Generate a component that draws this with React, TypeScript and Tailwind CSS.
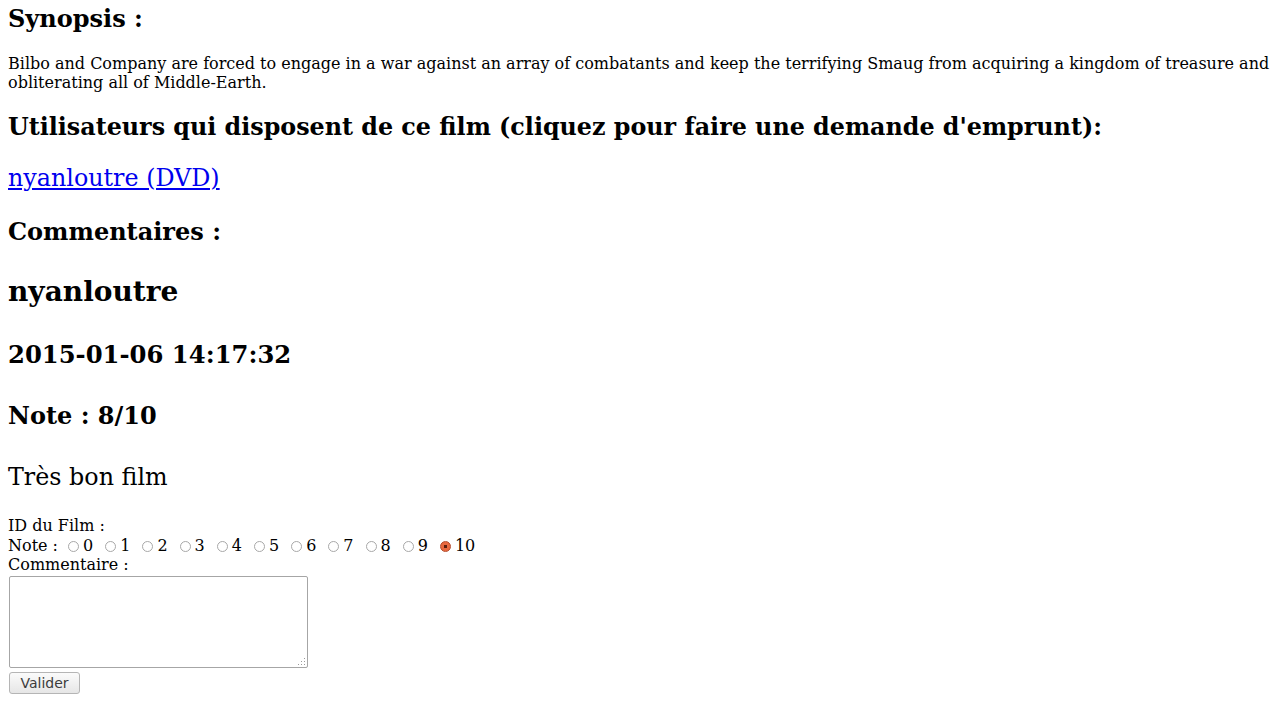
import React from 'react';

const serif = "font-['DejaVu_Serif',serif]";

function Radio({ checked, first }: { checked?: boolean; first?: boolean }) {
    return (
        <span
            className={
                "inline-block w-[11px] h-[11px] rounded-full border align-[-1px] mr-[4px] " +
                (first ? "ml-[10px] " : "ml-[12px] ") +
                (checked
                    ? "border-[#b3492a] bg-[radial-gradient(circle,#5a1f10_0,#5a1f10_1.5px,#e8693f_2px,#e8693f_100%)]"
                    : "border-[#a8a8a8] bg-white")
            }
        />
    );
}

export default function App() {
    const notes = [0, 1, 2, 3, 4, 5, 6, 7, 8, 9, 10];

    return (
        <div className={`${serif} text-black bg-white min-h-[710px] px-2 pt-[5px] text-[16px]`}>
            <h3 className="text-[24px] font-bold leading-[28px]">Synopsis :</h3>
            <p className="text-[16px] leading-[19px] mt-[21px]">
                Bilbo and Company are forced to engage in a war against an array of combatants and keep the terrifying Smaug from acquiring a kingdom of treasure and obliterating all of Middle-Earth.
            </p>

            <h3 className="text-[23.8px] font-bold leading-[28px] mt-[21px]">
                Utilisateurs qui disposent de ce film (cliquez pour faire une demande d'emprunt):
            </h3>
            <div className="mt-[23px] leading-[28px]">
                <a href="#" className="text-[23.8px] text-[#0000ee] underline">nyanloutre (DVD)</a>
            </div>

            <h3 className="text-[24px] font-bold leading-[28px] mt-[23px]">Commentaires :</h3>

            <h2 className="text-[28px] font-bold leading-[32px] mt-[30px]">nyanloutre</h2>
            <h3 className="text-[24.3px] font-bold leading-[28px] mt-[33px]">2015-01-06 14:17:32</h3>
            <h3 className="text-[24px] font-bold leading-[28px] mt-[33px]">Note : 8/10</h3>
            <p className="text-[23.8px] leading-[28px] mt-[33px]">Très bon film</p>

            <form className="mt-[24px]">
                <div className="leading-[21px]">ID du Film :</div>
                <div className="leading-[19px]">
                    Note :
                    {notes.map((n) => (
                        <label key={n}>
                            <Radio checked={n === 10} first={n === 0} />
                            {n}
                        </label>
                    ))}
                </div>
                <div className="leading-[19px]">Commentaire :</div>
                <div className="relative w-[299px] h-[92px] ml-[1px] mt-[2px] border border-[#a6a6a6] rounded-[2px] bg-white">
                    <svg className="absolute right-[1px] bottom-[1px]" width="10" height="10" viewBox="0 0 10 10">
                        {[[8, 2], [8, 5], [5, 5], [8, 8], [5, 8], [2, 8]].map(([x, y], i) => (
                            <rect key={i} x={x} y={y} width="1" height="1" fill="#9a9a9a" />
                        ))}
                    </svg>
                </div>
                <button
                    type="button"
                    className="block mt-[4px] ml-[1px] w-[71px] h-[22px] rounded-[3px] border border-[#b5b5b5] bg-gradient-to-b from-[#fbfbfb] to-[#e6e6e6] text-[14px] leading-[20px] text-[#3c3c3c] font-['DejaVu_Sans',sans-serif]"
                >
                    Valider
                </button>
            </form>
        </div>
    );
}
